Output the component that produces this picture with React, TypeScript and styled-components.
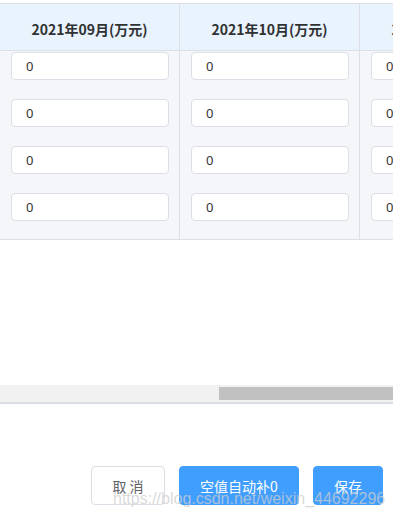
import React from "react";
import styled, { createGlobalStyle } from "styled-components";

const Global = createGlobalStyle`
  html, body { margin: 0; padding: 0; background: #fff; }
  body { font-family: "Noto Sans CJK SC", "Noto Sans", sans-serif; }
`;

const Page = styled.div`
  position: relative;
  width: 393px;
  height: 522px;
  overflow: hidden;
  background: #fff;
  padding-top: 3px;
  box-sizing: border-box;
`;

const TableArea = styled.div`
  height: 382px;
  border-top: 1px solid #dcdfe6;
  box-sizing: border-box;
  overflow: hidden;
`;

const Grid = styled.div`
  display: grid;
  grid-template-columns: repeat(3, 180px);
  width: 540px;
`;

const HeadCell = styled.div`
  height: 47px;
  background: #e8f3fe;
  border-right: 1px solid #dcdfe6;
  border-bottom: 1px solid #dcdfe6;
  display: flex;
  align-items: center;
  justify-content: center;
  font-weight: 700;
  font-size: 14px;
  color: #303133;
  padding-top: 4px;
  box-sizing: border-box;
  white-space: nowrap;
`;

const BodyCol = styled.div`
  background: #f4f6fa;
  border-right: 1px solid #dcdfe6;
  border-bottom: 1px solid #dcdfe6;
  display: flex;
  flex-direction: column;
`;

const Row = styled.div`
  height: 47px;
  padding: 1px 0 0 11px;
  box-sizing: border-box;
`;

const Input = styled.div`
  width: 158px;
  height: 28px;
  box-sizing: border-box;
  background: #fff;
  border: 1px solid #dcdfe6;
  border-radius: 4px;
  display: flex;
  align-items: center;
  padding-left: 14px;
  font-family: "Noto Sans", "Noto Sans CJK SC", sans-serif;
  font-size: 13px;
  color: #333;
`;

const Scrollbar = styled.div`
  height: 18px;
  width: 393px;
  background: #f1f1f1;
  display: flex;
  justify-content: flex-end;
  align-items: center;
  border-bottom: 1px solid #dcdfe6;
  box-sizing: border-box;
  padding-bottom: 1px;
`;

const Thumb = styled.div`
  width: 174px;
  height: 13px;
  background: #c1c1c1;
`;

const Divider = styled.div`
  width: 393px;
  height: 1px;
  background: #d8dce5;
`;

const Footer = styled.div`
  display: flex;
  justify-content: flex-end;
  gap: 14px;
  padding: 62px 10px 0 0;
`;

const Button = styled.div<{ $primary?: boolean; $w: number }>`
  width: ${(p) => p.$w}px;
  height: 39px;
  box-sizing: border-box;
  border-radius: 4px;
  display: flex;
  align-items: center;
  justify-content: center;
  font-size: 14px;
  white-space: pre;
  background: ${(p) => (p.$primary ? "#409eff" : "#fff")};
  color: ${(p) => (p.$primary ? "#fff" : "#606266")};
  border: 1px solid ${(p) => (p.$primary ? "#409eff" : "#dcdfe6")};
`;

const Watermark = styled.div`
  position: absolute;
  left: 113px;
  top: 490px;
  font-family: "Liberation Sans", Arial, sans-serif;
  font-size: 16px;
  color: rgba(205, 205, 205, 0.75);
  white-space: nowrap;
  pointer-events: none;
`;

const months = ["2021年09月(万元)", "2021年10月(万元)", "2021年11月(万元)"];

export default function App() {
  return (
    <>
      <Global />
      <Page>
        <TableArea>
          <Grid>
            {months.map((m) => (
              <HeadCell key={m}>{m}</HeadCell>
            ))}
            {months.map((m) => (
              <BodyCol key={m}>
                {[0, 1, 2, 3].map((i) => (
                  <Row key={i}>
                    <Input>0</Input>
                  </Row>
                ))}
              </BodyCol>
            ))}
          </Grid>
        </TableArea>
        <Scrollbar>
          <Thumb />
        </Scrollbar>
        <Divider />
        <Footer>
          <Button $w={74}>取 消</Button>
          <Button $primary $w={120}>空值自动补0</Button>
          <Button $primary $w={70}>保存</Button>
        </Footer>
        <Watermark>https://blog.csdn.net/weixin_44692296</Watermark>
      </Page>
    </>
  );
}
